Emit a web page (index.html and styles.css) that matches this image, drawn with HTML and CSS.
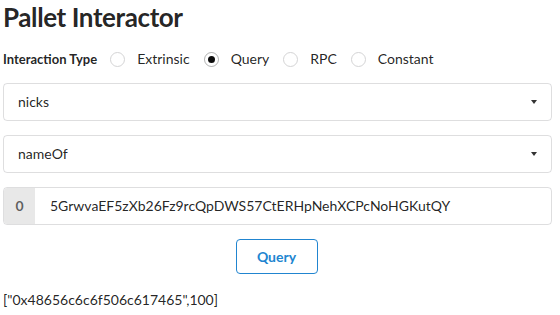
FILE: index.html
```html
<!DOCTYPE html>
<html lang="en">
<head>
  <meta charset="UTF-8">
  <meta name="viewport" content="width=device-width, initial-scale=1.0">
  <title>Pallet Interactor</title>
  <link rel="stylesheet" href="styles.css">
</head>
<body>
  <div class="page">
    <h1 class="title">Pallet Interactor</h1>

    <div class="type-row">
      <span class="type-label">Interaction Type</span>
      <label class="radio"><span class="radio-dot"></span>Extrinsic</label>
      <label class="radio checked"><span class="radio-dot"></span>Query</label>
      <label class="radio"><span class="radio-dot"></span>RPC</label>
      <label class="radio"><span class="radio-dot"></span>Constant</label>
    </div>

    <div class="fields">
      <div class="dropdown">
        <span class="dropdown-text">nicks</span>
        <span class="caret"></span>
      </div>
      <div class="dropdown">
        <span class="dropdown-text">nameOf</span>
        <span class="caret"></span>
      </div>
      <div class="labeled-input">
        <span class="input-label">0</span>
        <span class="input-value">5GrwvaEF5zXb26Fz9rcQpDWS57CtERHpNehXCPcNoHGKutQY</span>
      </div>
      <div class="button-row">
        <button class="query-btn">Query</button>
      </div>
      <div class="result">["0x48656c6c6f506c617465",100]</div>
    </div>
  </div>
</body>
</html>
```

FILE: styles.css
```css
* {
  box-sizing: border-box;
  margin: 0;
  padding: 0;
}

body {
  background: #ffffff;
  color: rgba(0, 0, 0, 0.87);
  font-family: 'Lato', 'Helvetica Neue', Arial, sans-serif;
  font-size: 14px;
  line-height: 20px;
}

.page {
  width: 560px;
  padding: 0 8px 0 3px;
}

.title {
  margin-top: 3px;
  font-size: 26px;
  line-height: 28px;
  font-weight: 700;
  letter-spacing: -0.4px;
}

.type-row {
  display: flex;
  align-items: center;
  height: 20px;
  margin-top: 18px;
}

.type-label {
  font-size: 13px;
  font-weight: 700;
  margin-right: 13px;
}

.radio {
  display: flex;
  align-items: center;
  margin-right: 14px;
}

.radio-dot {
  position: relative;
  width: 15px;
  height: 15px;
  border-radius: 50%;
  border: 1px solid #d4d4d5;
  margin-right: 12px;
}

.radio.checked .radio-dot {
  border-color: rgba(34, 36, 38, 0.35);
}

.radio.checked .radio-dot::after {
  content: '';
  position: absolute;
  top: 3px;
  left: 3px;
  width: 7px;
  height: 7px;
  border-radius: 50%;
  background: rgba(0, 0, 0, 0.95);
}

.fields {
  display: flex;
  flex-direction: column;
  gap: 14px;
  margin-top: 14px;
}

.dropdown {
  display: flex;
  align-items: center;
  justify-content: space-between;
  height: 38px;
  padding: 0 14px;
  border: 1px solid rgba(34, 36, 38, 0.15);
  border-radius: 4px;
}

.caret {
  width: 0;
  height: 0;
  border-left: 3.5px solid transparent;
  border-right: 3.5px solid transparent;
  border-top: 4px solid rgba(0, 0, 0, 0.8);
}

.labeled-input {
  display: flex;
  height: 38px;
  border: 1px solid rgba(34, 36, 38, 0.15);
  border-radius: 4px;
  overflow: hidden;
}

.input-label {
  width: 31px;
  display: flex;
  align-items: center;
  justify-content: center;
  background: #e8e8e8;
  color: rgba(0, 0, 0, 0.6);
  font-weight: 700;
}

.input-value {
  display: flex;
  align-items: center;
  padding-left: 15px;
}

.button-row {
  display: flex;
  justify-content: center;
  padding-right: 2px;
}

.query-btn {
  width: 82px;
  height: 35px;
  background: #ffffff;
  border: 1px solid #2185d0;
  border-radius: 4px;
  color: #2185d0;
  font-family: 'Lato', sans-serif;
  font-size: 14px;
  font-weight: 700;
}

.result {
  margin-top: 2px;
}
```
